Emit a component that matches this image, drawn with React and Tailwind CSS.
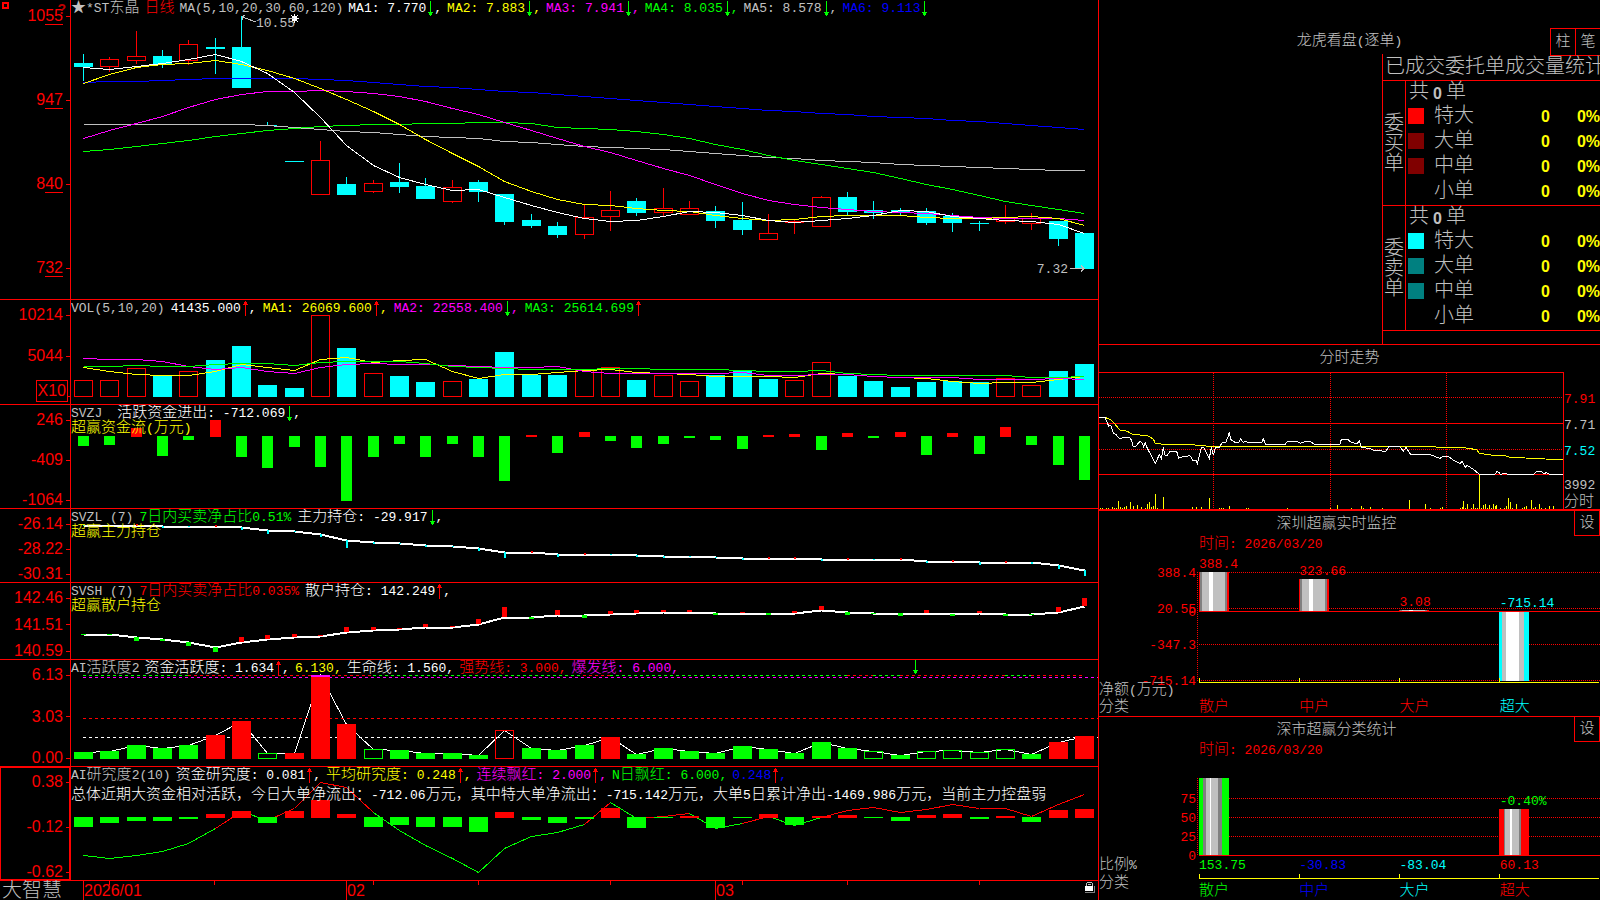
import { Fragment } from 'react';
import clsx from 'clsx';

const COUNT = 39;
const xAt = (i) => Math.round(83 + (i * 1001) / (COUNT - 1));

const RED = '#ff0000';
const CYAN = '#00ffff';
const GREEN = '#00ff00';
const YELLOW = '#ffff00';
const MAGENTA = '#ff00ff';
const SILVER = '#c0c0c0';
const BLUE = '#0000ff';

const TONES = {
  silver: 'text-[#c0c0c0]',
  white: 'text-white',
  yellow: 'text-[#ffff00]',
  magenta: 'text-[#ff00ff]',
  green: 'text-[#00ff00]',
  blue: 'text-[#0000ff]',
  red: 'text-[#ff0000]',
  cyan: 'text-[#00ffff]',
};

// [up, high, bodyTop, bodyBottom, low]
const CANDLES = [
  [0, 54, 63, 67, 81], [1, 57, 59, 67, 72], [1, 31, 56, 61, 64], [0, 50, 56, 64, 68],
  [1, 40, 44, 61, 65], [0, 38, 47, 49, 74], [0, 16, 47, 88, 88], [0, 122, 125, 126, 126],
  [0, 161, 161, 162, 162], [1, 141, 160, 195, 195], [0, 177, 184, 195, 195], [1, 180, 183, 192, 193],
  [0, 163, 182, 187, 193], [0, 178, 186, 199, 199], [1, 180, 187, 202, 203], [0, 180, 182, 192, 202],
  [0, 194, 194, 222, 225], [0, 214, 220, 226, 228], [0, 222, 226, 235, 238], [1, 204, 217, 235, 239],
  [1, 191, 210, 217, 231], [0, 198, 201, 213, 216], [1, 188, 208, 213, 216], [1, 201, 208, 215, 215],
  [0, 206, 211, 221, 228], [0, 202, 220, 230, 235], [1, 214, 233, 240, 240], [1, 219, 221, 222, 234],
  [1, 196, 197, 227, 227], [0, 192, 197, 212, 215], [0, 201, 210, 213, 219], [0, 208, 210, 212, 215],
  [0, 208, 211, 223, 225], [0, 213, 216, 223, 232], [0, 221, 223, 224, 231], [1, 205, 218, 222, 224],
  [1, 213, 218, 224, 230], [0, 221, 221, 239, 246], [0, 233, 233, 269, 269],
];

const PRICE_MA = [
  [BLUE, [82, 81, 81, 80, 79, 78, 78, 78, 78, 79, 80, 82, 84, 86, 87, 89, 91, 92, 94, 96, 98, 100, 102, 104, 106, 108, 110, 111, 113, 114, 116, 117, 118, 120, 121, 123, 125, 127, 129]],
  [SILVER, [124, 124, 124, 124, 124, 124, 124, 125, 127, 129, 131, 132, 134, 136, 137, 138, 141, 142, 144, 146, 147, 148, 149, 151, 153, 155, 157, 158, 160, 161, 162, 164, 165, 166, 167, 168, 169, 170, 170]],
  [GREEN, [151, 149, 146, 143, 140, 136, 133, 130, 128, 126, 125, 124, 124, 123, 123, 122, 122, 123, 127, 128, 129, 131, 134, 138, 144, 149, 155, 160, 164, 168, 172, 178, 184, 189, 195, 201, 205, 209, 213]],
  [MAGENTA, [138, 130, 123, 116, 107, 99, 94, 91, 91, 90, 91, 93, 96, 101, 108, 114, 122, 130, 138, 146, 152, 160, 168, 175, 184, 193, 200, 204, 207, 209, 211, 212, 213, 215, 217, 218, 218, 218, 220]],
  [YELLOW, [83, 74, 67, 64, 63, 60, 64, 70, 78, 88, 99, 111, 124, 139, 153, 166, 181, 191, 199, 204, 205, 208, 210, 211, 215, 218, 220, 219, 216, 215, 215, 215, 217, 218, 218, 217, 216, 218, 225]],
  ['#ffffff', [67, 69, 66, 63, 59, 54, 61, 73, 92, 117, 145, 165, 177, 184, 190, 189, 197, 205, 212, 218, 221, 220, 216, 211, 212, 215, 220, 222, 220, 218, 215, 210, 211, 216, 218, 220, 221, 224, 233]],
];

// [up, top]
const VOLUME = [
  [1, 380], [1, 380], [1, 368], [0, 375], [1, 371], [0, 360], [0, 346], [0, 385], [0, 388], [1, 315],
  [0, 348], [1, 373], [0, 376], [0, 382], [1, 381], [0, 379], [0, 352], [0, 375], [0, 375], [1, 369],
  [1, 367], [0, 380], [1, 375], [1, 381], [0, 375], [0, 371], [0, 379], [1, 380], [1, 362], [0, 376],
  [0, 381], [0, 387], [0, 382], [0, 381], [0, 382], [1, 378], [1, 385], [0, 371], [0, 364],
];

const VOLUME_MA = [
  [YELLOW, [367, 371, 374, 375, 375, 371, 364, 367, 370, 359, 357, 362, 360, 359, 371, 378, 374, 374, 372, 370, 369, 372, 373, 374, 376, 376, 376, 377, 373, 374, 376, 377, 378, 381, 383, 382, 382, 379, 376]],
  [MAGENTA, [358, 359, 359, 361, 366, 369, 367, 371, 373, 367, 364, 363, 364, 364, 365, 366, 367, 367, 366, 371, 373, 373, 373, 373, 373, 372, 375, 375, 374, 374, 376, 377, 377, 377, 379, 379, 379, 378, 379]],
  [GREEN, [366, 366, 365, 366, 366, 364, 363, 363, 365, 362, 361, 361, 361, 363, 366, 367, 368, 369, 369, 369, 368, 368, 369, 369, 369, 370, 371, 371, 370, 373, 374, 375, 375, 375, 375, 375, 377, 377, 376]],
];

const FUND_BASE = 436;
const FUND_FLOW = [446, 445, 428, 456, 440, 420, 457, 468, 447, 467, 501, 457, 444, 457, 444, 457, 481, 435, 453, 432, 441, 448, 444, 438, 440, 449, 435, 434, 450, 433, 438, 432, 455, 433, 454, 427, 445, 465, 480];

const MAIN_HOLD = [525, 525, 525, 526, 526, 526, 527, 530, 531, 534, 540, 542, 543, 545, 546, 548, 552, 552, 554, 554, 554, 555, 556, 556, 557, 558, 558, 558, 559, 559, 559, 559, 561, 561, 562, 562, 562, 565, 570];
// negative rises above the line
const MAIN_MARKS = [1, 0, -1, 2, 1, -1, 3, 4, 1, 3, 8, 2, 1, 2, 1, 3, 6, -1, 3, -1, 1, 2, 2, 1, 1, 2, -1, -1, 2, -1, 1, -1, 2, -1, 3, -1, 2, 4, 6];

const RETAIL_HOLD = [634, 634, 637, 639, 642, 647, 642, 639, 637, 636, 632, 630, 629, 627, 627, 624, 617, 617, 615, 615, 614, 613, 612, 612, 613, 613, 613, 613, 610, 612, 613, 613, 613, 614, 613, 614, 614, 612, 606];
const RETAIL_MARKS = [1, 1, 4, 2, 4, 5, -5, -4, -3, -1, -5, -3, -1, -3, -1, -5, -10, 2, -5, 3, -3, -3, -2, -2, 2, -1, 2, -2, -4, 3, 1, 3, -3, 2, -2, 2, 1, -5, -8];

// [colour, top, hollow]
const ACTIVITY = [
  ['g', 752], ['g', 751], ['g', 745], ['g', 748], ['g', 745], ['r', 735], ['r', 721], ['g', 753, 1], ['r', 753], ['r', 675],
  ['r', 724], ['g', 749, 1], ['g', 750], ['g', 753], ['g', 753], ['g', 755], ['r', 730, 1], ['g', 748], ['g', 750], ['g', 745],
  ['r', 737], ['g', 754], ['g', 748], ['g', 751], ['g', 753], ['g', 746], ['g', 749], ['g', 753], ['g', 742], ['g', 748],
  ['g', 751, 1], ['g', 755], ['g', 751, 1], ['g', 750, 1], ['g', 752, 1], ['g', 749, 1], ['g', 754], ['r', 742], ['r', 736],
];

// [fromX, toX, colour]
const TREND_DASHES = [
  [83, 188, GREEN], [188, 373, RED], [373, 583, GREEN], [583, 610, RED], [610, 847, GREEN], [847, 873, RED],
  [873, 900, GREEN], [900, 1005, RED], [1005, 1031, GREEN], [1031, 1083, RED],
];

const RESEARCH_BASE = 817;
const RESEARCH_BARS = [827, 823, 821, 821, 819, 814, 811, 823, 811, 800, 814, 827, 825, 827, 827, 832, 812, 820, 823, 819, 808, 828, 818, 816, 828, 818, 814, 825, 816, 815, 818, 821, 815, 814, 819, 816, 822, 810, 809];
const RESEARCH_LINE = [855, 858, 855, 851, 843, 828, 811, 820, 808, 782, 787, 812, 830, 845, 858, 872, 848, 836, 832, 824, 802, 818, 816, 813, 828, 823, 816, 825, 817, 810, 807, 812, 809, 804, 808, 808, 816, 804, 794];
const RESEARCH_TREND = 'gggggrgrrrrggggggggrgrrggrggrrrrrrrrrr';

const INTRADAY_PRICE =
  '27,232 45,232 56,258 62,256 70,280 78,284 90,297 100,292 118,292 124,300 130,320 138,318 150,304 158,310 160,322 166,308 172,325 196,370 208,344 214,356 220,322 224,344 230,348 240,334 260,334 266,354 280,350 300,347 308,360 318,360 322,370 334,322 342,324 350,340 358,355 364,322 370,346 376,322 388,322 396,308 408,306 414,290 418,275 422,298 436,308 446,308 452,297 460,308 466,304 472,307 516,307 520,296 526,312 586,312 592,304 620,304 632,310 646,304 660,304 672,312 750,312 754,298 774,298 782,306 800,312 808,304 814,322 840,326 850,331 888,334 896,320 930,320 940,334 948,322 962,343 1020,344 1050,355 1060,349 1076,350 1090,360 1110,370 1116,364 1126,382 1132,376 1150,388 1168,403 1215,403 1220,395 1228,397 1230,403 1246,400 1254,403 1330,403 1340,395 1356,396 1362,402 1368,398 1378,403 1420,403';
const INTRADAY_AVG =
  '27,232 45,232 64,240 90,270 112,274 130,284 170,286 190,297 196,310 220,313 305,314 360,319 1035,319 1040,322 1116,322 1160,329 1168,340 1210,346 1245,347 1260,352 1306,354 1365,357 1420,358';
const INTRADAY_VOLUME = [
  [32, 503], [38, 503], [50, 503], [56, 503], [68, 500], [74, 503], [79, 503], [85, 483], [91, 500], [97, 503],
  [103, 500], [109, 497], [121, 486], [130, 497], [142, 495], [154, 500], [166, 503], [172, 491], [178, 486],
  [184, 500], [190, 497], [196, 462], [202, 503], [220, 471], [307, 501], [319, 500], [334, 500], [358, 474],
  [388, 503], [394, 503], [400, 503], [418, 498], [470, 503], [475, 503], [592, 503], [721, 503], [742, 495],
  [784, 503], [814, 498], [820, 503], [841, 500], [877, 503], [958, 480], [1006, 492], [1021, 503], [1051, 503],
  [1057, 500], [1111, 503], [1116, 500], [1120, 483], [1126, 503], [1132, 492], [1144, 503], [1150, 492],
  [1156, 503], [1162, 503], [1168, 404], [1174, 503], [1180, 495], [1186, 492], [1192, 503], [1198, 495],
  [1204, 503], [1210, 492], [1216, 498], [1219, 495], [1231, 503], [1243, 503], [1249, 497], [1255, 474],
  [1261, 486], [1267, 503], [1279, 491], [1297, 503], [1303, 500], [1309, 497], [1324, 480], [1330, 503],
  [1336, 500], [1348, 491], [1354, 503], [1366, 503], [1378, 498], [1390, 498],
];

const ORDER_GROUPS = [
  {
    side: '委买单',
    rows: [['特大', 'bg-[#ff0000]'], ['大单', 'bg-[#800000]'], ['中单', 'bg-[#800000]'], ['小单', '']],
  },
  {
    side: '委卖单',
    rows: [['特大', 'bg-[#00ffff]'], ['大单', 'bg-[#008080]'], ['中单', 'bg-[#008080]'], ['小单', '']],
  },
];

// Chinese runs are set larger than the fixed-pitch latin runs beside them
function Mixed({ children }) {
  return String(children).split(/([\u2605\u3000-\uffef]+)/).map((part, i) =>
    i % 2 ? <span key={i} className="text-[15px]">{part}</span> : <Fragment key={i}>{part}</Fragment>
  );
}

function Arrow({ up }) {
  return (
    <svg viewBox="0 0 8 15" className="h-[15px] w-2 shrink-0" shapeRendering="crispEdges">
      {up ? (
        <path d="M4 0h1v1h1v2h1v1h-2v11h-1v-11h-2v-1h1v-2h1z" fill={RED} />
      ) : (
        <path d="M4 0h1v11h2v1h-1v2h-1v1h-1v-1h-1v-2h-1v-1h2z" fill={GREEN} />
      )}
    </svg>
  );
}

function Legend({ items, loose }) {
  return (
    <p className={clsx('flex', loose ? 'gap-1.5' : 'gap-[5px]')}>
      {items.map(({ text, tone, arrow, comma = true, wide }) => (
        <span key={text} className={clsx('flex', TONES[tone], wide && 'mr-[10px]')}>
          <span><Mixed>{text}</Mixed></span>
          {arrow && <Arrow up={arrow === 'up'} />}
          {comma && ','}
        </span>
      ))}
    </p>
  );
}

function AxisLabel({ children }) {
  return (
    <div className="flex items-center justify-end leading-[14px]">
      <span>{children}</span>
      <span className="ml-[3px] h-px w-1 bg-[#ff0000]" />
    </div>
  );
}

function Panel({ top, height, axis, legend, children, selected, overlay }) {
  return (
    <section className="flex min-h-0 border-b border-[#ff0000]">
      <div className="flex w-[71px] shrink-0 border-r border-[#ff0000]">
        <div
          className={clsx(
            'relative flex flex-1 flex-col font-[Liberation_Sans] text-base text-[#ff0000]',
            Array.isArray(axis) && 'justify-between pb-px pt-2',
            selected && 'outline outline-1 -outline-offset-1 outline-[#ff0000]'
          )}
        >
          {Array.isArray(axis) ? axis.map((v) => <AxisLabel key={v}>{v}</AxisLabel>) : axis}
        </div>
      </div>
      <div className="relative grid min-w-0 flex-1 grid-cols-[minmax(0,1fr)] grid-rows-[minmax(0,1fr)]">
        <svg
          viewBox={`71 ${top} 1027 ${height}`}
          preserveAspectRatio="none"
          shapeRendering="crispEdges"
          className="col-start-1 row-start-1 h-full w-full"
        >
          {children}
        </svg>
        <div className="z-10 col-start-1 row-start-1 overflow-hidden pt-px">{legend}</div>
        {overlay}
      </div>
    </section>
  );
}

function Line({ values, color, width = 1 }) {
  return (
    <polyline
      points={values.map((y, i) => `${xAt(i)},${y}`).join(' ')}
      transform="translate(0.5 0.5)"
      fill="none"
      stroke={color}
      strokeWidth={width}
    />
  );
}

function Bar({ i, top, bottom, color, hollow }) {
  const x = xAt(i) - 9;
  return hollow ? (
    <rect x={x + 0.5} y={top + 0.5} width={18} height={Math.max(bottom - top - 1, 0.5)} fill="none" stroke={color} />
  ) : (
    <rect x={x} y={top} width={19} height={bottom - top} fill={color} />
  );
}

function PricePanel() {
  return (
    <Panel
      top={0}
      height={299}
      legend={
        <Legend
          items={[
            { text: '★*ST东晶', tone: 'silver', comma: false },
            { text: '日线', tone: 'red', comma: false },
            { text: 'MA(5,10,20,30,60,120)', tone: 'silver', comma: false },
            { text: 'MA1: 7.770', tone: 'white', arrow: 'down' },
            { text: 'MA2: 7.883', tone: 'yellow', arrow: 'down' },
            { text: 'MA3: 7.941', tone: 'magenta', arrow: 'down' },
            { text: 'MA4: 8.035', tone: 'green', arrow: 'down' },
            { text: 'MA5: 8.578', tone: 'silver', arrow: 'down' },
            { text: 'MA6: 9.113', tone: 'blue', arrow: 'down', comma: false },
          ]}
        />
      }
      axis={
        <div className="flex flex-1 flex-col justify-between pb-6 pt-[9px]">
          {[['10', '55'], ['9', '47'], ['8', '40'], ['7', '32']].map(([head, tail]) => (
            <AxisLabel key={tail}>
              {head}
              <span className="border-b border-[#ff0000]">{tail}</span>
            </AxisLabel>
          ))}
          <svg viewBox="0 0 8 8" className="absolute left-0.5 top-0.5 h-2 w-2" shapeRendering="crispEdges">
            <path d="M1 1h5v5h-5z" fill="none" stroke={RED} strokeWidth="2" />
          </svg>
          <span className="absolute right-1 top-0.5 text-sm font-bold leading-[14px] text-[#c00000]">?</span>
        </div>
      }
      overlay={
        <>
          <span className="absolute left-[185px] top-4 text-[#c0c0c0]">10.55</span>
          <span className="absolute right-[30px] top-[262px] text-[#c0c0c0]">7.32</span>
        </>
      }
    >
      {CANDLES.map(([up, high, top, bottom, low], i) => (
        <g key={i}>
          <rect x={xAt(i)} y={high} width={1} height={top - high} fill={up ? RED : CYAN} />
          <rect x={xAt(i)} y={bottom} width={1} height={low - bottom} fill={up ? RED : CYAN} />
          <Bar i={i} top={top} bottom={bottom} color={up ? RED : CYAN} hollow={up} />
        </g>
      ))}
      {PRICE_MA.map(([color, values]) => <Line key={color} values={values} color={color} />)}
      <path d="M256 22l-14-5m3-2l-3 2v3" fill="none" stroke={SILVER} />
      <path d="M1070 268.5h14m-3-3l3 3l-3 3" fill="none" stroke={SILVER} />
      <path d="M292 16h5v5h-5zM294 14h1v9h-1zM290 18h9v1h-9zM291 15h1v1h-1zM297 15h1v1h-1zM291 21h1v1h-1zM297 21h1v1h-1z" fill="#fff" />
    </Panel>
  );
}

function VolumePanel() {
  return (
    <Panel
      top={300}
      height={104}
      legend={
        <Legend
          loose
          items={[
            { text: 'VOL(5,10,20)', tone: 'silver', comma: false },
            { text: '41435.000', tone: 'white', arrow: 'up' },
            { text: 'MA1: 26069.600', tone: 'yellow', arrow: 'up' },
            { text: 'MA2: 22558.400', tone: 'magenta', arrow: 'down' },
            { text: 'MA3: 25614.699', tone: 'green', arrow: 'up', comma: false },
          ]}
        />
      }
      axis={
        <div className="flex flex-1 flex-col pt-2">
          <AxisLabel>10214</AxisLabel>
          <div className="mt-[27px]"><AxisLabel>5044</AxisLabel></div>
          <div className="mt-[17px] flex items-start justify-end">
            <span className="border border-[#ff0000] px-px leading-[20px]">X10</span>
            <span className="mt-4 h-px w-0.5 bg-[#ff0000]" />
          </div>
        </div>
      }
    >
      {VOLUME.map(([up, top], i) => (
        <Bar key={i} i={i} top={top} bottom={397} color={up ? RED : CYAN} hollow={up} />
      ))}
      {VOLUME_MA.map(([color, values]) => <Line key={color} values={values} color={color} />)}
    </Panel>
  );
}

function FundFlowPanel() {
  return (
    <Panel
      top={405}
      height={103}
      axis={['246', '-409', '-1064']}
      legend={
        <>
          <Legend
            items={[
              { text: 'SVZJ', tone: 'silver', comma: false, wide: true },
              { text: '活跃资金进出: -712.069', tone: 'white', arrow: 'down' },
            ]}
          />
          <p className="text-[#ffff00]"><Mixed>超赢资金流(万元)</Mixed></p>
        </>
      }
    >
      {FUND_FLOW.map((y, i) => {
        const out = y > FUND_BASE;
        return (
          <rect
            key={i}
            x={xAt(i) - 5}
            y={out ? FUND_BASE : y}
            width={11}
            height={out ? y - FUND_BASE : FUND_BASE + 1 - y}
            fill={out ? GREEN : RED}
          />
        );
      })}
    </Panel>
  );
}

function MainHoldPanel() {
  return (
    <Panel
      top={509}
      height={73}
      axis={['-26.14', '-28.22', '-30.31']}
      legend={
        <>
          <Legend
            loose
            items={[
              { text: 'SVZL (7)', tone: 'silver', comma: false },
              { text: '7日内买卖净占比0.51%', tone: 'green', comma: false },
              { text: '主力持仓: -29.917', tone: 'white', arrow: 'down' },
            ]}
          />
          <p className="text-[#ffff00]"><Mixed>超赢主力持仓</Mixed></p>
        </>
      }
    >
      <Line values={MAIN_HOLD} color="#ffffff" width={2} />
      {MAIN_MARKS.map((m, i) => (
        <rect
          key={i}
          x={xAt(i)}
          y={m < 0 ? MAIN_HOLD[i] - 1 : MAIN_HOLD[i]}
          width={2}
          height={m < 0 ? 2 : m}
          fill={m < 0 ? RED : CYAN}
        />
      ))}
    </Panel>
  );
}

function RetailHoldPanel() {
  return (
    <Panel
      top={583}
      height={76}
      axis={['142.46', '141.51', '140.59']}
      legend={
        <>
          <Legend
            loose
            items={[
              { text: 'SVSH (7)', tone: 'silver', comma: false },
              { text: '7日内买卖净占比0.035%', tone: 'red', comma: false },
              { text: '散户持仓: 142.249', tone: 'white', arrow: 'up' },
            ]}
          />
          <p className="text-[#ffff00]"><Mixed>超赢散户持仓</Mixed></p>
        </>
      }
    >
      <Line values={RETAIL_HOLD} color="#ffffff" width={2} />
      {RETAIL_MARKS.map((m, i) => (
        <rect
          key={i}
          x={xAt(i) - 2}
          y={m < 0 ? RETAIL_HOLD[i] + m : RETAIL_HOLD[i]}
          width={5}
          height={Math.abs(m)}
          fill={m < 0 ? RED : GREEN}
        />
      ))}
    </Panel>
  );
}

function ActivityPanel() {
  return (
    <Panel
      top={660}
      height={106}
      axis={['6.13', '3.03', '0.00']}
      legend={
        <Legend
          items={[
            { text: 'AI活跃度2', tone: 'silver', comma: false },
            { text: '资金活跃度: 1.634', tone: 'white', arrow: 'up' },
            { text: '6.130', tone: 'yellow' },
            { text: '生命线: 1.560', tone: 'white' },
            { text: '强势线: 3.000', tone: 'red' },
            { text: '爆发线: 6.000', tone: 'magenta' },
          ]}
        />
      }
    >
      <Line values={ACTIVITY.map(([, top]) => top)} color="#ffffff" />
      {TREND_DASHES.map(([from, to, color]) => (
        <path key={from} d={`M${from} 675.5H${to}`} stroke={color} strokeDasharray="3 3" />
      ))}
      <path d="M83 677.5H1098" stroke={MAGENTA} strokeDasharray="3 3" />
      <path d="M83 718.5H1098" stroke={RED} strokeDasharray="3 3" />
      <path d="M83 737.5H1098" stroke="#ffffff" strokeDasharray="3 3" />
      {ACTIVITY.map(([c, top, hollow], i) => (
        <Bar key={i} i={i} top={top} bottom={759} color={c === 'r' ? RED : GREEN} hollow={hollow} />
      ))}
      <rect x={xAt(9) - 9} y={675} width={19} height={2} fill={MAGENTA} />
      <path d="M915 660h1v10h2v1h-1v2h-1v1h-1v-1h-1v-2h-1v-1h2z" fill={GREEN} />
    </Panel>
  );
}

function ResearchPanel() {
  return (
    <Panel
      top={767}
      height={113}
      selected
      axis={['0.38', '-0.12', '-0.62']}
      legend={
        <>
          <Legend
            items={[
              { text: 'AI研究度2(10)', tone: 'silver', comma: false },
              { text: '资金研究度: 0.081', tone: 'white', arrow: 'up' },
              { text: '平均研究度: 0.248', tone: 'yellow', arrow: 'up' },
              { text: '连续飘红: 2.000', tone: 'magenta', arrow: 'up' },
              { text: 'N日飘红: 6.000', tone: 'green' },
              { text: '0.248', tone: 'blue', arrow: 'up' },
            ]}
          />
          <p className="mt-[5px] text-white">
            <Mixed>
              总体近期大资金相对活跃，今日大单净流出：-712.06万元，其中特大单净流出：-715.142万元，大单5日累计净出-1469.986万元，当前主力控盘弱
            </Mixed>
          </p>
        </>
      }
    >
      {RESEARCH_TREND.split('').map((c, i) => (
        <path
          key={i}
          d={`M${xAt(i)} ${RESEARCH_LINE[i]}L${xAt(i + 1)} ${RESEARCH_LINE[i + 1]}`}
          transform="translate(0.5 0.5)"
          stroke={c === 'r' ? RED : GREEN}
        />
      ))}
      {RESEARCH_BARS.map((y, i) => {
        const down = y > RESEARCH_BASE;
        return (
          <Bar
            key={i}
            i={i}
            top={down ? RESEARCH_BASE : y}
            bottom={down ? y : RESEARCH_BASE + 1}
            color={down ? GREEN : RED}
          />
        );
      })}
    </Panel>
  );
}

function Timeline() {
  return (
    <footer className="flex min-h-0">
      <div className="w-[71px] shrink-0 pl-0.5 text-xl leading-[22px] text-[#c0c0c0]">大智慧</div>
      <div className="relative grid min-w-0 flex-1 grid-rows-[minmax(0,1fr)]">
        <svg
          viewBox="71 881 1027 19"
          preserveAspectRatio="none"
          shapeRendering="crispEdges"
          className="col-start-1 row-start-1 h-full w-full"
        >
          {[109, 214, 373, 478, 610, 742, 847, 979].map((x) => (
            <rect key={x} x={x} y={881} width={1} height={4} fill={RED} />
          ))}
        </svg>
        <div className="col-start-1 row-start-1 grid grid-cols-[12fr_263fr_369fr_383fr] font-[Liberation_Sans] text-base leading-[19px] text-[#ff0000]">
          {['2026/01', '02', '03'].map((label, i) => (
            <span key={label} className={clsx('border-l border-[#ff0000]', i === 0 && 'col-start-2')}>
              {label}
            </span>
          ))}
        </div>
        <svg viewBox="0 0 10 11" className="absolute right-[3px] top-px h-[11px] w-[10px]" shapeRendering="crispEdges">
          <path d="M2 0h5v1h-5zM1 1h1v3h-1zM7 1h1v3h-1zM3 2h3v1h-3z" fill={SILVER} />
          <path d="M0 4h8v5h-8z" fill="#fff" />
          <path d="M8 4h2v7h-10v-1h9v-6z" fill="#808080" />
        </svg>
      </div>
    </footer>
  );
}

function OrderStats() {
  return (
    <section className="flex min-h-0 flex-col border-b border-[#ff0000] pt-7">
      <header className="grid h-[26px] shrink-0 grid-cols-[1fr_auto_1fr] text-[#c0c0c0]">
        <h2 className="col-start-2 leading-[28px]"><Mixed>龙虎看盘(逐单)</Mixed></h2>
        <div className="flex justify-end text-[15px]">
          <button type="button" className="w-[25px] border-y border-l border-[#ff0000]">柱</button>
          <button type="button" className="w-[25px] border-y border-l border-[#ff0000]">笔</button>
        </div>
      </header>
      <div className="flex min-h-0 flex-1 justify-end">
        <div className="w-[218px] border-l border-[#ff0000] text-xl text-[#c0c0c0]">
          <h3 className="h-[27px] overflow-hidden whitespace-nowrap border-b border-[#ff0000] pl-0.5 leading-[28px]">
            已成交委托单成交量统计
          </h3>
          <table className="w-full table-fixed border-separate border-spacing-0 leading-5">
            <colgroup>
              <col className="w-[23px]" />
              <col className="w-[26px]" />
              <col className="w-[48px]" />
              <col className="w-[70px]" />
              <col className="w-[50px]" />
            </colgroup>
            {ORDER_GROUPS.map(({ side, rows }) => (
              <tbody key={side}>
                <tr className="h-[25px]">
                  <th rowSpan={5} scope="rowgroup" className="border-b border-r border-[#ff0000] p-0 font-light">
                    <span className="mx-auto mt-1 block w-5">{side}</span>
                  </th>
                  <td colSpan={4} className="p-0 pl-[3px]">
                    <span className="flex">
                      共
                      <b className="mx-1 font-[Liberation_Sans] text-base font-bold leading-[22px]">0</b>
                      单
                    </span>
                  </td>
                </tr>
                {rows.map(([label, swatch], i) => {
                  const edge = clsx('p-0 align-top', i === rows.length - 1 && 'border-b border-[#ff0000]');
                  const num = clsx(edge, 'text-right font-[Liberation_Sans] text-base leading-[22px] font-bold text-[#ffff00]');
                  return (
                    <tr key={label} className="h-[25px]">
                      <td className={edge}>
                        <span className={clsx('ml-0.5 mt-0.5 block h-4 w-4', swatch)} />
                      </td>
                      <td className={clsx(edge, 'whitespace-nowrap leading-[22px]')}>
                        <span className="ml-0.5">{label}</span>
                      </td>
                      <td className={num}>0</td>
                      <td className={num}>0%</td>
                    </tr>
                  );
                })}
              </tbody>
            ))}
          </table>
        </div>
      </div>
    </section>
  );
}

function Intraday() {
  return (
    <section className="flex min-h-0 flex-col border-b-2 border-[#ff0000]">
      <h2 className="h-[27px] shrink-0 text-center leading-[28px] text-[#c0c0c0]"><Mixed>分时走势</Mixed></h2>
      <div className="flex min-h-0 flex-1">
        <svg
          viewBox="27 96 1395 411"
          preserveAspectRatio="none"
          shapeRendering="crispEdges"
          className="h-full min-w-0 flex-1"
        >
          <g fill={RED}>
            <rect x={27} y={96} width={1395} height={3} />
            <rect x={27} y={249} width={1395} height={3} />
            <rect x={27} y={402} width={1395} height={3} />
            <rect x={1419} y={96} width={3} height={411} />
          </g>
          <g stroke={RED} strokeWidth={3} strokeDasharray="3 3">
            <path d="M27 172.5H1419" />
            <path d="M27 328.5H1419" />
            <path d="M370.5 99V507" />
            <path d="M721.5 99V507" />
            <path d="M1069.5 99V507" />
          </g>
          {INTRADAY_VOLUME.map(([x, top]) => (
            <rect key={x} x={x - (x % 3)} y={top} width={3} height={507 - top} fill={YELLOW} />
          ))}
          <polyline points={INTRADAY_AVG} fill="none" stroke={YELLOW} strokeWidth={3} />
          <polyline points={INTRADAY_PRICE} fill="none" stroke="#fff" strokeWidth={3} />
        </svg>
        <div className="w-9 shrink-0 text-[#c0c0c0]">
          <p className="mt-5 text-[#ff0000]">7.91</p>
          <p className="mt-[11px]">7.71</p>
          <p className="mt-[11px] text-[#00ffff]">7.52</p>
          <p className="mt-[19px]">3992</p>
          <p className="mt-0.5"><Mixed>分时</Mixed></p>
        </div>
      </div>
    </section>
  );
}

// stripes: [width, colour] pairs, left to right
function StripedBar({ x, top, bottom, stripes }) {
  let left = x;
  return stripes.map(([w, color], i) => {
    const rect = <rect key={i} x={left} y={top} width={w} height={bottom - top} fill={color} />;
    left += w;
    return rect;
  });
}

const RED_EDGE = [[1, RED], [2, '#808080'], [7, SILVER], [4, '#fff'], [12, SILVER], [2, '#808080'], [2, RED]];
const CYAN_EDGE = [[3, CYAN], [4, SILVER], [13, '#fff'], [5, SILVER], [5, CYAN]];
const GREEN_WIDE = [[4, GREEN], [3, '#808080'], [4, SILVER], [1, '#fff'], [7, SILVER], [4, '#808080'], [7, GREEN]];
const RED_WIDE = [[5, RED], [1, '#808080'], [5, SILVER], [2, '#fff'], [7, SILVER], [2, '#808080'], [8, RED]];

function Monitor({ title, top, height, yAxis, plot, children, className }) {
  return (
    <section className={clsx('flex min-h-0 flex-col', className)}>
      <header className="flex h-[25px] shrink-0 text-[#c0c0c0]">
        <h2 className="flex-1 text-center leading-[28px]"><Mixed>{title}</Mixed></h2>
        <button type="button" className="w-[26px] border-x border-b border-[#ff0000] text-[15px]">设</button>
      </header>
      <p className="h-4 shrink-0 pl-[100px] leading-[18px] text-[#ff0000]"><Mixed>时间: 2026/03/20</Mixed></p>
      <div className="relative flex min-h-0 flex-1">
        <svg
          viewBox={`1099 ${top} 501 ${height}`}
          preserveAspectRatio="none"
          shapeRendering="crispEdges"
          className="absolute inset-0 h-full w-full"
        >
          {plot}
        </svg>
        <div className="relative w-[100px] shrink-0 text-[#c0c0c0]">{yAxis}</div>
        <div className="relative grid min-w-0 flex-1 grid-cols-4">{children}</div>
      </div>
    </section>
  );
}

function Category({ value, name, tone, pad, note }) {
  return (
    <div className={clsx('flex flex-col', pad, TONES[tone])}>
      {note && <span className="text-[#00ff00]">{note}</span>}
      <span className={clsx(note && 'mt-[49px]')}>{value}</span>
      <span className="mt-auto leading-[17px]"><Mixed>{name}</Mixed></span>
    </div>
  );
}

function NetMonitor() {
  return (
    <Monitor
      title="深圳超赢实时监控"
      top={552}
      height={164}
      className="border-b border-[#ff0000]"
      yAxis={
        <>
          <div className="flex flex-col gap-[21px] pr-[3px] pt-[14px] text-right text-[#ff0000]">
            <span>388.4</span>
            <span>20.55</span>
            <span>-347.3</span>
            <span>-715.14</span>
          </div>
          <span className="absolute right-[3px] top-[53px] text-[#ff0000]">0</span>
          <p className="absolute bottom-0 left-0 whitespace-nowrap leading-[17px]">
            <Mixed>净额(万元)</Mixed><br /><Mixed>分类</Mixed>
          </p>
        </>
      }
      plot={
        <>
          <g stroke={RED} strokeDasharray="1 1">
            <path d="M1197.5 572V681" />
            <path d="M1199 572.5H1600" />
            <path d="M1199 608.5H1600" />
            <path d="M1199 644.5H1600" />
            <path d="M1199 680.5H1600" />
          </g>
          <StripedBar x={1199} top={572} bottom={611} stripes={RED_EDGE} />
          <StripedBar x={1299} top={579} bottom={611} stripes={RED_EDGE} />
          <StripedBar x={1399} top={610} bottom={611} stripes={RED_EDGE} />
          <StripedBar x={1499} top={612} bottom={681} stripes={CYAN_EDGE} />
          <path d="M1199 611.5H1600" stroke={RED} />
          <path d="M1199.5 678V682.5H1599M1299.5 678V682M1399.5 678V682M1499.5 678V682" fill="none" stroke={YELLOW} />
        </>
      }
    >
      <Category value="388.4" name="散户" tone="red" pad="pt-[5px]" />
      <Category value="323.66" name="中户" tone="red" pad="pt-3" />
      <Category value="3.08" name="大户" tone="red" pad="pt-[43px]" />
      <Category value="-715.14" name="超大" tone="cyan" pad="pt-11" />
    </Monitor>
  );
}

function RatioMonitor() {
  return (
    <Monitor
      title="深市超赢分类统计"
      top={758}
      height={142}
      yAxis={
        <>
          <div className="flex flex-col gap-[4px] pr-[3px] pt-[34px] text-right text-[#ff0000]">
            <span>75</span>
            <span>50</span>
            <span>25</span>
            <span>0</span>
          </div>
          <p className="absolute bottom-[7px] left-0 whitespace-nowrap leading-[18px]">
            <Mixed>比例%</Mixed><br /><Mixed>分类</Mixed>
          </p>
        </>
      }
      plot={
        <>
          <g stroke={RED} strokeDasharray="1 1">
            <path d="M1197.5 778V855" />
            <path d="M1199 798.5H1600" />
            <path d="M1199 817.5H1600" />
            <path d="M1199 836.5H1600" />
          </g>
          <StripedBar x={1199} top={778} bottom={855} stripes={GREEN_WIDE} />
          <StripedBar x={1499} top={809} bottom={855} stripes={RED_WIDE} />
          <path d="M1199 855.5H1600" stroke={RED} />
          <path d="M1199.5 874V878.5H1599M1299.5 874V878M1399.5 874V878M1499.5 874V878" fill="none" stroke={YELLOW} />
        </>
      }
    >
      <Category value="153.75" name="散户" tone="green" pad="pt-[100px]" />
      <Category value="-30.83" name="中户" tone="blue" pad="pt-[100px]" />
      <Category value="-83.04" name="大户" tone="cyan" pad="pt-[100px]" />
      <Category value="60.13" name="超大" tone="red" pad="pt-9" note="-0.40%" />
    </Monitor>
  );
}

export default function App() {
  return (
    <main className="grid h-screen grid-cols-[1098fr_502fr] grid-rows-[minmax(0,1fr)] overflow-hidden bg-black font-['Liberation_Mono','Noto_Sans_CJK_SC',monospace] text-[13px] font-light leading-[15px]">
      <div className="grid min-w-0 grid-rows-[300fr_105fr_104fr_74fr_77fr_107fr_114fr_19fr] whitespace-nowrap">
        <PricePanel />
        <VolumePanel />
        <FundFlowPanel />
        <MainHoldPanel />
        <RetailHoldPanel />
        <ActivityPanel />
        <ResearchPanel />
        <Timeline />
      </div>
      <div className="grid min-w-0 grid-rows-[345fr_166fr_206fr_183fr] border-l border-[#ff0000]">
        <OrderStats />
        <Intraday />
        <NetMonitor />
        <RatioMonitor />
      </div>
    </main>
  );
}
